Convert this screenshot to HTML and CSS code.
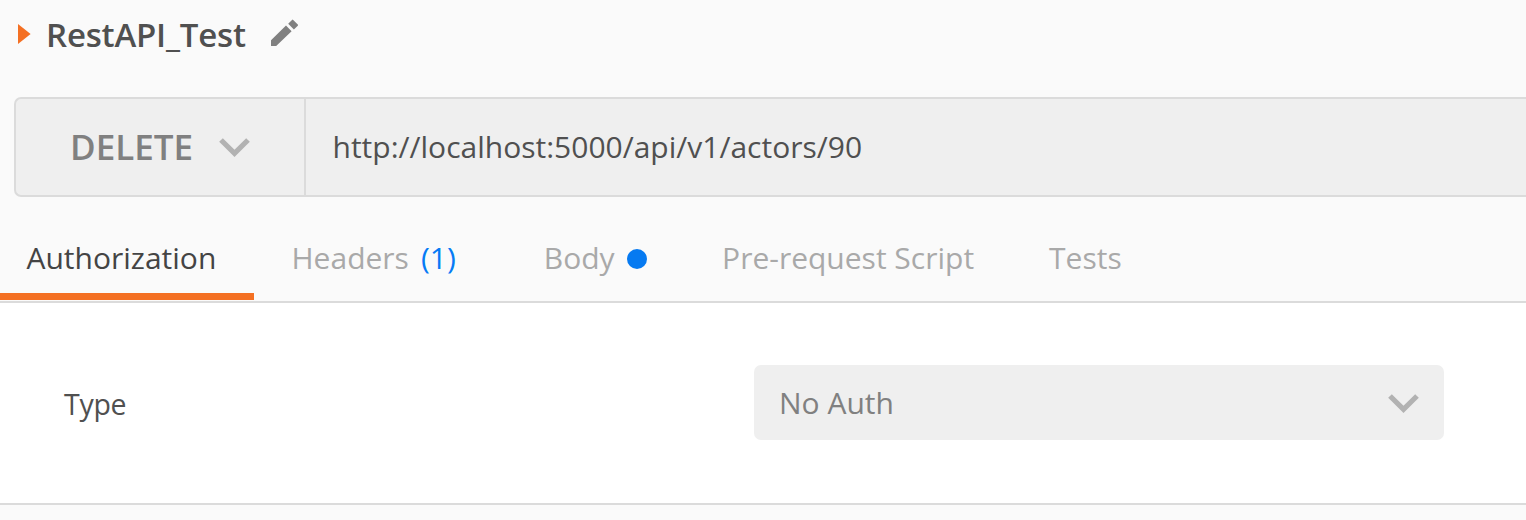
FILE: index.html
```html
<!DOCTYPE html>
<html lang="en">
<head>
<meta charset="utf-8">
<title>RestAPI_Test</title>
<link rel="stylesheet" href="styles.css">
</head>
<body>
<header class="title-bar">
  <svg class="disclosure" width="13" height="20" viewBox="0 0 13 20"><path d="M0 0L12.6 10L0 20Z"/></svg>
  <h1 class="title">RestAPI_Test</h1>
  <svg class="pencil" width="28" height="28" viewBox="0 0 28 28"><path d="M0 21.2L15 6.6L20.6 12.2L5.2 27H0ZM17.2 4.7L21 .9Q21.5 .3 22.2 .9L26.8 5.6Q27.3 6.2 26.8 6.8L22.9 10.5Z"/></svg>
</header>
<section class="request">
  <div class="method"><span class="method-name">DELETE</span>
    <svg class="chevron" width="31" height="19" viewBox="0 0 31 19"><path d="M2 2L15.5 15.3L29 2"/></svg>
  </div>
  <div class="url"><span class="url-text">http://localhost:5000/api/v1/actors/90</span></div>
</section>
<nav class="tabs">
  <div class="tab active"><span class="label">Authorization</span></div>
  <div class="tab with-count"><span class="label">Headers</span><span class="count">(1)</span></div>
  <div class="tab"><span class="label">Body</span><i class="dot"></i></div>
  <div class="tab"><span class="label">Pre-request Script</span></div>
  <div class="tab"><span class="label">Tests</span></div>
</nav>
<main class="panel">
  <span class="type">Type</span>
  <div class="select"><span class="select-text">No Auth</span>
    <svg class="chevron" width="31" height="19" viewBox="0 0 31 19"><path d="M2 2L15.5 15.3L29 2"/></svg>
  </div>
</main>
</body>
</html>
```
FILE: styles.css
```css
* { box-sizing: border-box; }
body { margin: 0; height: 520px; overflow: hidden; background: #fafafa; color: #505050; font: 30px "Open Sans", sans-serif; white-space: nowrap; }
.title-bar { height: 97px; padding: 0 0 28px 18px; display: flex; align-items: center; }
.disclosure { margin-bottom: 1px; fill: #f47023; }
.title { margin: 0 0 0 15px; width: 200px; font-size: 33px; font-weight: 600; line-height: 40px; letter-spacing: -0.2px; }
.pencil { margin: 0 0 3px 25px; fill: #808080; }
.request { height: 100px; margin-left: 14px; display: flex; background: #efefef; border: 2px solid #dbdbdb; border-right: 0; border-radius: 7px 0 0 7px; }
.method { width: 290px; padding-left: 54px; border-right: 2px solid #dbdbdb; display: flex; align-items: center; color: #808080; font-size: 35px; font-weight: 600; }
.method-name { width: 122px; padding-bottom: 2px; }
.chevron { margin-left: 27px; fill: none; stroke: #b2b2b2; stroke-width: 5.2; }
.url { padding: 0 0 2px 26.5px; display: flex; align-items: center; }
.tabs { height: 106px; padding-top: 25px; border-bottom: 2px solid #dbdbdb; display: flex; color: #a9a9a9; }
.tab { height: 78px; padding: 0 38px 6px 37px; display: flex; align-items: center; line-height: 40px; }
.active { width: 254px; padding: 0 0 0 26.5px; border-bottom: 7px solid #f47023; color: #444; }
.with-count { padding-left: 37.5px; padding-right: 51px; }
.count { margin-left: 12px; color: #067bf5; }
.dot { width: 20px; height: 20px; margin: 1px 0 0 12.5px; border-radius: 50%; background: #067af1; }
.panel { height: 202px; padding: 62px 0 0 64px; background: #fff; border-bottom: 2px solid #dbdbdb; display: flex; }
.type { width: 690px; font-size: 28.5px; letter-spacing: -0.3px; line-height: 78px; }
.select { width: 690px; height: 75px; padding: 0 25px; border-radius: 7px; background: #efefef; display: flex; align-items: center; justify-content: space-between; color: #808080; }
.select .chevron { margin-top: 1px; }
```
